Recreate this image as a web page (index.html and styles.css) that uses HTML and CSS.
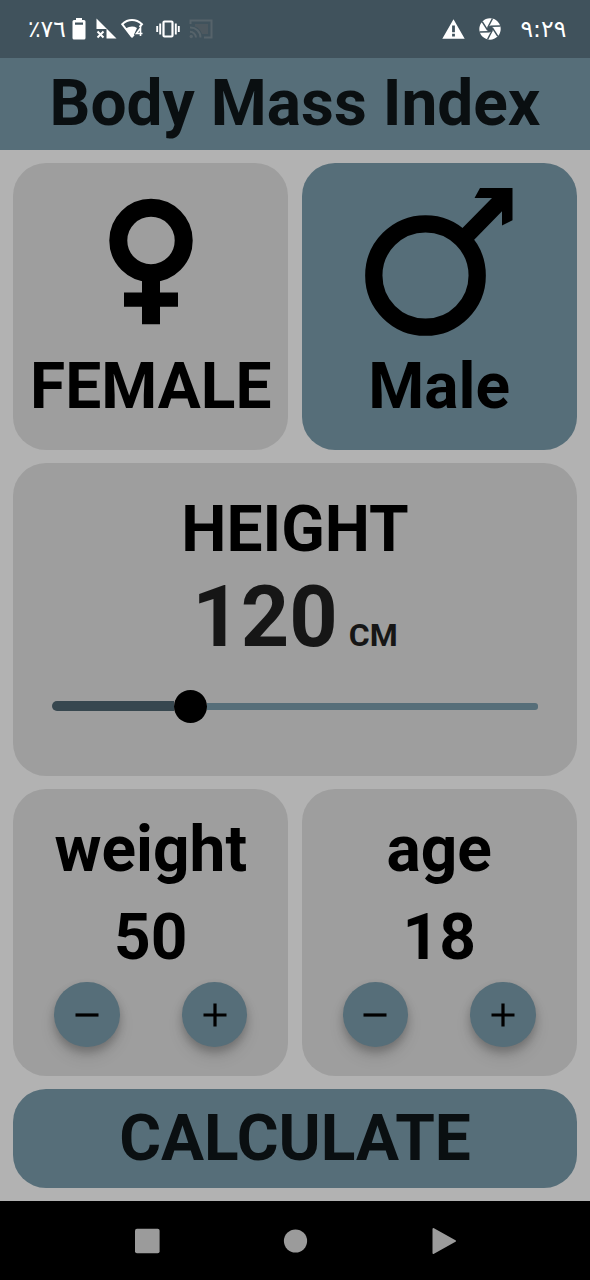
FILE: index.html
```html
<!DOCTYPE html>
<html lang="en">
<head>
<meta charset="utf-8">
<title>Body Mass Index</title>
<link rel="stylesheet" href="styles.css">
</head>
<body>
<div class="status">
  <span class="status-text battery-level">٪٧٦</span>
  <svg class="icon battery" width="14" height="22" viewBox="0 0 14 22"><path fill="#fff" fill-rule="evenodd" d="M4 0h6v2h2q1.500 0 1.500 1.500v16.500q0 1.500-1.500 1.500H2q-1.500 0-1.500-1.500V3.500Q.5 2 2 2h2zM3 4.500v2.200h8V4.500z"/></svg>
  <svg class="icon signal" width="21" height="21" viewBox="0 0 21 21"><path fill="#fff" d="M.5.500L20.500 20.500H10.500V11H.5z"/><path stroke="#fff" stroke-width="2" d="M1.500 13.500l6 6m0-6l-6 6"/></svg>
  <svg class="icon wifi" width="23" height="20" viewBox="0 0 23 20"><path fill="none" stroke="#fff" stroke-width="1.900" d="M11 18L1.200 5.200Q5.500 1 11 1t10 4.200L18.500 8"/><path fill="#fff" d="M11 19L4.500 9.500Q11 6 16 9l-3 6.500.5 1z"/><path fill="none" stroke="#fff" stroke-width="1.600" d="M19.500 17V9L15.500 14.500h6"/></svg>
  <svg class="icon vibrate" width="24" height="18" viewBox="0 0 24 18"><rect x="7.500" y="1.500" width="9" height="15" rx="1" fill="none" stroke="#fff" stroke-width="2.200"/><path stroke="#fff" stroke-width="1.900" d="M4.200 3.500v11M19.800 3.500v11M1.200 6v6M22.800 6v6"/></svg>
  <svg class="icon cast" width="24" height="20" viewBox="0 0 24 20"><path fill="#4d585f" d="M6 5h13v10h-6Q11 9 6 7.500z"/><g fill="none" stroke="#56636a" stroke-width="2"><path d="M1.500 5V1.500h21v17H15"/><path d="M1 8.500a10 10 0 0 1 10.500 10M1 12.800a6 6 0 0 1 6 5.700"/></g><circle cx="2.200" cy="17.500" r="1.700" fill="#56636a"/></svg>
  <svg class="icon warning" width="23" height="20" viewBox="0 0 23 20"><path fill="#fff" fill-rule="evenodd" d="M11.500.3L22.700 19.700H.3zM10.100 6.500v6.700h2.800V6.500zm0 8.300v2.700h2.800v-2.700z"/></svg>
  <svg class="icon shutter" width="22" height="22" viewBox="0 0 22 22"><circle cx="11" cy="11" r="10.700" fill="#fff"/><circle cx="11" cy="11" r="3" fill="#40525c"/><g stroke="#40525c" stroke-width="1.500"><path d="M8.800 9.500L13.500.5"/><path d="M8.800 9.500L13.500.5" transform="rotate(60 11 11)"/><path d="M8.800 9.500L13.500.5" transform="rotate(120 11 11)"/><path d="M8.800 9.500L13.500.5" transform="rotate(180 11 11)"/><path d="M8.800 9.500L13.500.5" transform="rotate(240 11 11)"/><path d="M8.800 9.500L13.500.5" transform="rotate(300 11 11)"/></g></svg>
  <span class="status-text clock">٩:٢٩</span>
</div>
<header class="appbar"><h1 class="label">Body Mass Index</h1></header>
<main class="content">
  <div class="pair">
    <section class="card gender">
      <svg class="symbol" width="164" height="164" viewBox="0 0 164 164"><circle cx="82" cy="67.500" r="32.700" fill="none" stroke="#000" stroke-width="18"/><path d="M73 104.500h18v15h18v14.300h-18v17.500H73v-17.500H55v-14.300h18z"/></svg>
      <span class="label">FEMALE</span>
    </section>
    <section class="card gender selected">
      <svg class="symbol" width="164" height="164" viewBox="0 0 164 164"><circle cx="68.500" cy="102.500" r="51.700" fill="none" stroke="#000" stroke-width="17.300"/><path d="M102 58.500l33-33.500h-17.500l5.500-10h32.500v32.200L145 52.500V38.200L115 69z"/></svg>
      <span class="label">Male</span>
    </section>
  </div>
  <section class="card height">
    <span class="label">HEIGHT</span>
    <div class="reading"><span class="value">120</span><span class="unit">CM</span></div>
    <div class="slider"><div class="active"></div><div class="thumb"></div><div class="rest"></div></div>
  </section>
  <div class="pair">
    <section class="card counter">
      <span class="label">weight</span><span class="label">50</span>
      <div class="buttons">
        <button class="round" aria-label="Decrease weight"><svg width="24" height="24" viewBox="0 0 24 24"><path stroke="#000" stroke-width="3.200" d="M.5 12h23"/></svg></button>
        <button class="round" aria-label="Increase weight"><svg width="24" height="24" viewBox="0 0 24 24"><path stroke="#000" stroke-width="3.200" d="M.5 12h23M12 .5v23"/></svg></button>
      </div>
    </section>
    <section class="card counter">
      <span class="label">age</span><span class="label">18</span>
      <div class="buttons">
        <button class="round" aria-label="Decrease age"><svg width="24" height="24" viewBox="0 0 24 24"><path stroke="#000" stroke-width="3.200" d="M.5 12h23"/></svg></button>
        <button class="round" aria-label="Increase age"><svg width="24" height="24" viewBox="0 0 24 24"><path stroke="#000" stroke-width="3.200" d="M.5 12h23M12 .5v23"/></svg></button>
      </div>
    </section>
  </div>
  <button class="calculate label">CALCULATE</button>
</main>
<nav class="navbar">
  <svg width="26" height="26" viewBox="0 0 26 26"><rect x="1" y=".7" width="24.600" height="24.600" rx="2" fill="#9b9b9b"/></svg>
  <svg width="26" height="26" viewBox="0 0 26 26"><circle cx="12.500" cy="13" r="11.600" fill="#9b9b9b"/></svg>
  <svg width="26" height="28" viewBox="0 0 26 28"><path fill="#9b9b9b" stroke="#9b9b9b" stroke-width="2" stroke-linejoin="round" d="M2.500 2L24 14 2.500 26z"/></svg>
</nav>
</body>
</html>
```
FILE: styles.css
```css
* { box-sizing: border-box; }
body {
  margin: 0;
  width: 590px;
  height: 1280px;
  display: flex;
  flex-direction: column;
  background: #b2b2b2;
  color: #000;
  font-family: Roboto, "Liberation Sans", sans-serif;
  overflow: hidden;
}
svg { display: block; flex: none; }
button { border: 0; padding: 0; font-family: inherit; }
.status {
  height: 57.500px;
  flex: none;
  display: flex;
  align-items: center;
  padding: 0 27px 0 28px;
  background: #40525c;
}
.status-text {
  color: #fff;
  font: 23.500px/26px "DejaVu Sans", sans-serif;
  letter-spacing: -1.800px;
  direction: ltr;
  unicode-bidi: bidi-override;
  white-space: nowrap;
}
.battery-level { width: 36px; }
.battery { margin-left: 7.500px; }
.signal { margin-left: 10.500px; }
.wifi { margin-left: 3.500px; }
.vibrate { margin-left: 12px; }
.cast { margin-left: 9.500px; }
.warning { margin-left: auto; }
.shutter { margin-left: 14px; }
.clock { width: 42px; margin-left: 19.500px; margin-right: .5px; }
.label { margin: 0; font-size: 64px; line-height: 76.800px; font-weight: 700; white-space: nowrap; }
.appbar {
  height: 92px;
  flex: none;
  display: flex;
  align-items: center;
  justify-content: center;
  padding-top: 1px;
  background: #566e79;
  color: #0a0f11;
}
.content {
  flex: 1;
  min-height: 0;
  display: flex;
  flex-direction: column;
  gap: 13.100px;
  padding: 13.100px;
}
.pair { display: flex; gap: 13.100px; height: 287px; flex: none; }
.card {
  flex: 1;
  min-width: 0;
  display: flex;
  flex-direction: column;
  align-items: center;
  background: #9e9e9e;
  border-radius: 33px;
}
.selected { background: #566e79; }
.gender { padding-top: 10.500px; }
.gender .label { margin-top: 11.500px; }
.height { flex: none; height: 313.500px; padding-top: 29px; }
.reading { display: flex; align-items: baseline; gap: 11px; color: #161616; line-height: 100px; }
.value { font-size: 84.500px; font-weight: 700; }
.unit { font-size: 32px; font-weight: 700; }
.slider { width: 486px; height: 34px; margin-top: 4px; display: flex; align-items: center; }
.active { width: 122px; height: 10px; border-radius: 5px 0 0 5px; background: #37474f; }
.thumb { width: 33px; height: 33px; border-radius: 50%; background: #000; }
.rest { flex: 1; height: 6.500px; border-radius: 0 3px 3px 0; background: #566e79; }
.counter { padding-top: 23px; }
.counter .label + .label { margin-top: 11px; }
.buttons { width: 100%; display: flex; justify-content: space-between; padding: 0 41px; margin-top: 5px; }
.round {
  width: 65.600px;
  height: 65.600px;
  display: flex;
  align-items: center;
  justify-content: center;
  border-radius: 50%;
  background: #566e79;
  box-shadow: 0 5px 8px rgba(0, 0, 0, .22), 0 10px 16px rgba(0, 0, 0, .1);
}
.calculate { height: 98.500px; flex: none; padding-top: 1px; border-radius: 33px; background: #566e79; color: #0a0f11; }
.navbar {
  height: 79px;
  flex: none;
  display: flex;
  align-items: center;
  justify-content: space-between;
  padding: 0 133px 0 134px;
  background: #000;
}
```
